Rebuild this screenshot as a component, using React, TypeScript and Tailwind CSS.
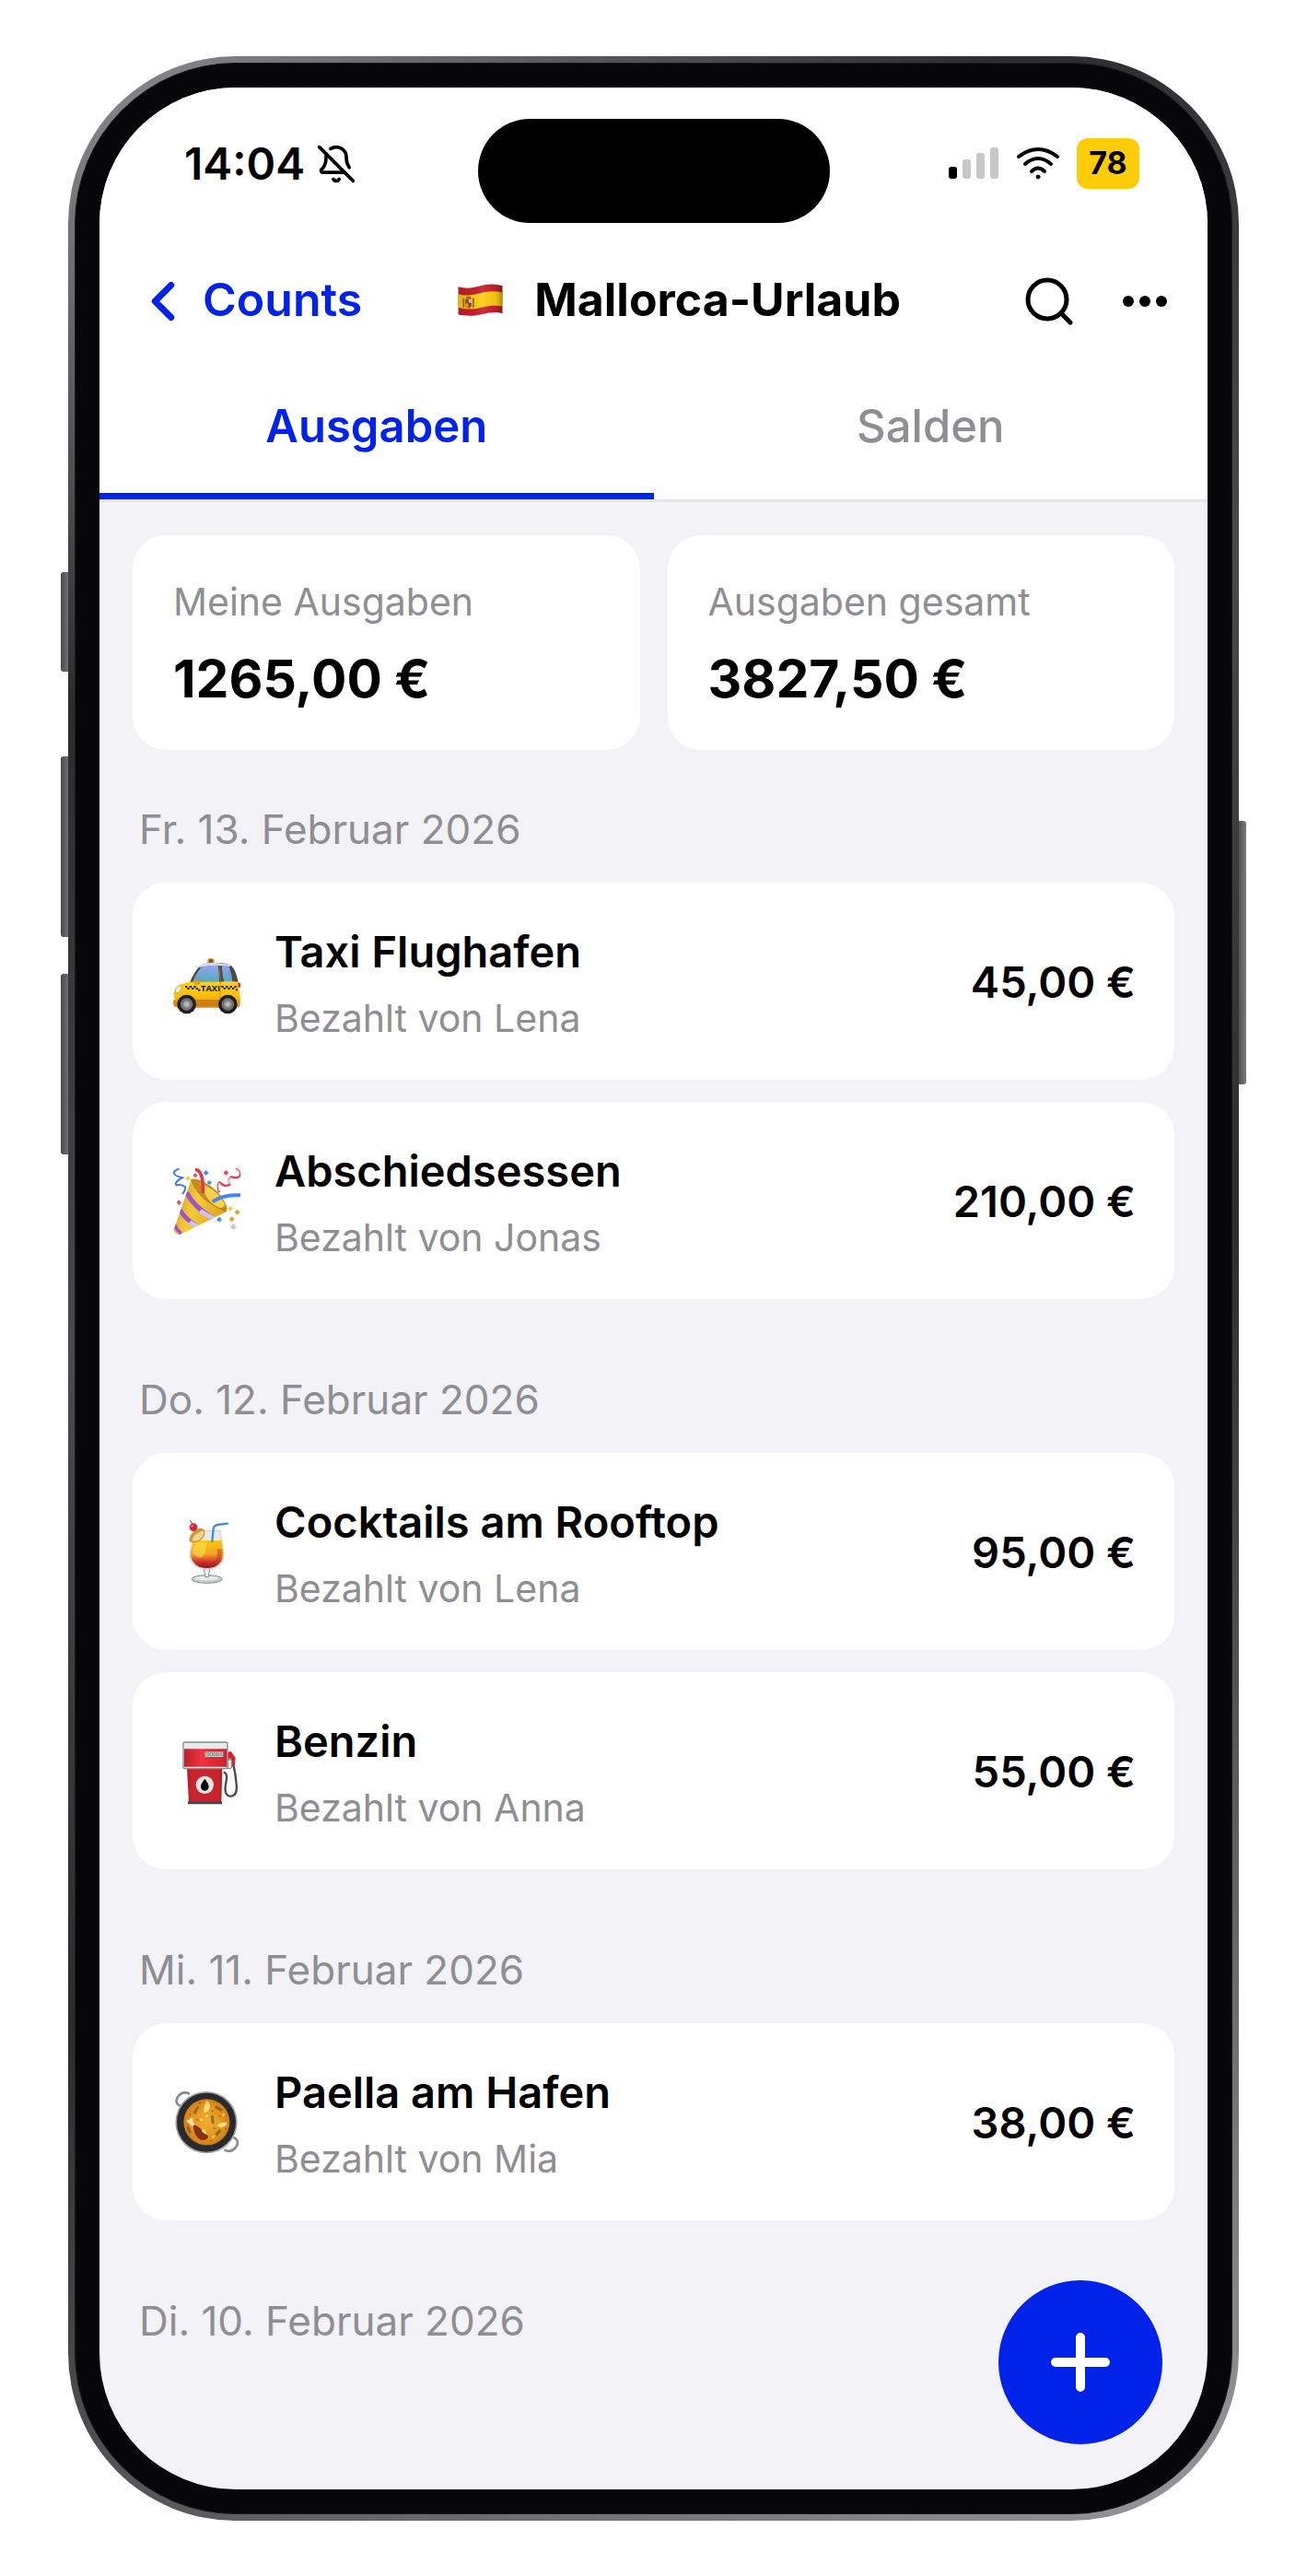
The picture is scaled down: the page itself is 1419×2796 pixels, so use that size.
import type { ReactNode } from "react";
import { BellOff, ChevronLeft } from "lucide-react";

type Expense = {
  id: string;
  title: string;
  paidBy: string;
  amount: string;
  icon: ReactNode;
};

type ExpenseDay = {
  date: string;
  expenses: Expense[];
};

function SpainFlag() {
  const wave = "M1310 783 C1345 793 1372 782 1395 777 C1420 772 1440 775 1455 780 V871 C1435 864 1412 868 1390 873 C1362 880 1335 880 1310 874 Z";
  return (
    <svg viewBox="1309 773 147 106" className="h-[35px] w-[49px] shrink-0" role="img" aria-label="Spanien">
      <defs>
        <linearGradient id="flag-shade" x1="0" x2="1" y1="0" y2="0">
          <stop offset="0" stopColor="#000" stopOpacity="0.12" />
          <stop offset="0.3" stopColor="#000" stopOpacity="0.02" />
          <stop offset="0.55" stopColor="#fff" stopOpacity="0.08" />
          <stop offset="0.85" stopColor="#000" stopOpacity="0.06" />
          <stop offset="1" stopColor="#000" stopOpacity="0.3" />
        </linearGradient>
      </defs>
      <path d={wave} fill="#c4202a" />
      <path
        d="M1310 807 C1340 816 1368 807 1393 801 C1418 796 1438 798 1455 802 V848 C1437 843 1412 845 1391 850 C1365 857 1336 858 1310 851 Z"
        fill="#ffcb12"
      />
      <path d={wave} fill="url(#flag-shade)" />
      <rect x="1325" y="820" width="5" height="31" fill="#8a5a1c" />
      <rect x="1357" y="820" width="5" height="31" fill="#8a5a1c" />
      <path d="M1333 823 h21 v20 q-2 10 -10.500 10 q-8.500 0 -10.500 -10 Z" fill="#a3402a" />
      <path d="M1344 823 h10 v13 h-10 Z" fill="#c9b8a8" />
      <path d="M1334 837 h9 v14 q-8 -2 -9 -9 Z" fill="#e0a526" />
      <circle cx="1344" cy="837" r="3" fill="#3f4d8a" />
      <path d="M1335 822 q0 -8 9 -8 q9 0 9 8 Z" fill="#a8571f" />
    </svg>
  );
}

function TaxiIcon() {
  return (
    <svg viewBox="54 26 219 219" className="size-full">
      <defs>
        <linearGradient id="taxi-body" x1="0" x2="0" y1="0" y2="1">
          <stop offset="0" stopColor="#ffd21a" />
          <stop offset="0.55" stopColor="#fcbf0a" />
          <stop offset="1" stopColor="#d88a12" />
        </linearGradient>
        <linearGradient id="taxi-glass" x1="0" x2="0" y1="0" y2="1">
          <stop offset="0" stopColor="#93a5f2" />
          <stop offset="1" stopColor="#56a9b8" />
        </linearGradient>
        <radialGradient id="taxi-hub">
          <stop offset="0" stopColor="#d4d4d4" />
          <stop offset="0.7" stopColor="#7c7c7c" />
          <stop offset="1" stopColor="#585858" />
        </radialGradient>
      </defs>
      <path d="M166 75 v-9 q0 -6 6 -6 h9 q7 0 7 6 v9 Z" fill="#e09a1c" />
      <rect x="171" y="63" width="12" height="12" rx="3" fill="#5b5b5b" />
      <path d="M107 141 Q128 88 150 79 Q172 72 214 75 Q240 77 250 91 Q262 111 266 141 Z" fill="#4a4a4c" />
      <path d="M128 90 Q150 75 178 74 Q220 73 241 82 L238 87 Q190 79 146 88 Z" fill="#dcdcde" />
      <path d="M116 139 Q130 105 146 89 Q165 81 200 82 Q205 110 204 139 Z" fill="url(#taxi-glass)" />
      <path d="M213 82 Q231 82 236 88 Q245 108 247 134 L220 136 Q213 113 213 82 Z" fill="url(#taxi-glass)" />
      <path
        d="M56 177 Q58 155 72 147 Q91 137 116 136 H205 Q236 132 265 136 Q270 148 270 166 Q275 195 271 214 Q268 220 250 220 H70 Q56 218 55 209 Q53 198 59 193 Z"
        fill="url(#taxi-body)"
      />
      <path d="M126 194 H205 V216 H126 Z" fill="#cf7f17" />
      <path d="M56 193 Q66 202 78 204 L72 218 Q56 217 55 208 Z" fill="#d7871a" />
      <path d="M205 84 Q205 120 209 138 L206 190" fill="none" stroke="#c67c0c" strokeWidth="2" />
      <path d="M61 165 Q65 149 79 149 Q84 157 77 166 Q69 174 61 171 Z" fill="#f6f3ea" stroke="#c9932c" strokeWidth="2" />
      <ellipse cx="132" cy="138" rx="10" ry="8" fill="#e5a011" />
      <path d="M265 139 h7 q3 7 1 15 h-7 Z" fill="#d42a35" />
      <g fill="#201a08">
        <path d="M93 149h7v6h-7zM107 149h7v6h-7zM121 149h7v6h-7zM100 155h7v6h-7zM114 155h7v6h-7zM128 155h7v6h-7zM135 160h7v6h-7z" />
        <path d="M211 149h7v6h-7zM225 149h7v6h-7zM239 149h7v6h-7zM253 149h7v6h-7zM218 155h7v6h-7zM232 155h7v6h-7zM246 155h7v6h-7zM258 159h6v6h-6z" />
      </g>
      <text x="144" y="167" fontSize="28" fontWeight="700" fontFamily="Open Sans, sans-serif" fill="#171204">
        TAXI
      </text>
      {[98, 232].map((cx) => (
        <g key={cx}>
          <circle cx={cx} cy="209" r="31" fill="#1f1f20" />
          <circle cx={cx} cy="209" r="19" fill="url(#taxi-hub)" stroke="#9a9a9a" strokeWidth="2" />
          <circle cx={cx} cy="209" r="6" fill="#bdbdbd" />
        </g>
      ))}
    </svg>
  );
}

function PartyIcon() {
  return (
    <svg viewBox="54 740 219 219" className="size-full overflow-visible">
      <defs>
        <linearGradient id="party-cone" x1="0" x2="1" y1="0" y2="0.4">
          <stop offset="0" stopColor="#c98f16" />
          <stop offset="0.5" stopColor="#f6c93a" />
          <stop offset="1" stopColor="#dfa21c" />
        </linearGradient>
        <clipPath id="party-clip">
          <path d="M113 780 Q130 845 228 884 L78 958 Q66 962 55 946 Z" />
        </clipPath>
      </defs>
      <path d="M112 781 Q120 772 155 788 Q210 817 228 866 Q233 883 222 885 Q150 862 112 781 Z" fill="#c78c1c" />
      <path d="M142 792 Q205 818 222 862 Q215 876 196 870 Q160 846 142 792 Z" fill="#f5d34e" />
      <g clipPath="url(#party-clip)">
        <rect x="50" y="775" width="185" height="190" fill="url(#party-cone)" />
        <path d="M98 822 Q120 868 184 906" fill="none" stroke="#9a55cf" strokeWidth="15" />
        <path d="M142 882 Q160 895 186 907" fill="none" stroke="#cfc2f5" strokeWidth="15" />
        <path d="M76 878 Q94 910 130 930" fill="none" stroke="#9a55cf" strokeWidth="14" />
        <path d="M108 918 Q118 926 134 932" fill="none" stroke="#cfc2f5" strokeWidth="14" />
        <path d="M58 926 Q64 942 80 956" fill="none" stroke="#9a55cf" strokeWidth="11" />
      </g>
      <path d="M113 780 Q131 845 226 884" fill="none" stroke="#b07a14" strokeWidth="3" />
      <path d="M126 748 Q153 748 151 824" fill="none" stroke="#e6364a" strokeWidth="11" />
      <path d="M182 852 Q217 827 273 831" fill="none" stroke="#4a86ea" strokeWidth="12" />
      <path d="M74 744 Q52 752 58 762 Q66 770 84 774 Q54 790 66 798 Q82 794 93 804 Q96 814 84 827" fill="none" stroke="#3f78e6" strokeWidth="6" />
      <path d="M203 822 Q196 786 207 790 Q222 806 238 796 Q232 774 245 771 Q264 778 271 768 Q272 750 258 745" fill="none" stroke="#dd4458" strokeWidth="7" />
      <path d="M205 817 Q199 789 207 793 M237 794 Q234 777 244 775 M268 765 Q269 751 259 748" fill="none" stroke="#e4d6ee" strokeWidth="5" />
      <g fill="#4d8df0">
        <path d="M161 749l9 9-9 9-9-9zM172 782l8 8-8 8-8-8zM204 901l9 9-9 9-9-9z" />
      </g>
      <g fill="#e05466">
        <path d="M126 758l8 8-8 8-8-8zM226 749l9 9-9 9-9-9zM73 846l8 9-8 9-8-9z" />
      </g>
      <g fill="#f4ce4e">
        <path d="M102 767l9 9-9 9-9-9zM240 865l9 9-9 9-9-9z" />
      </g>
      <g fill="#d9a42a">
        <path d="M263 877l9 9-9 9-9-9zM245 900l9 9-9 9-9-9z" />
      </g>
      <path d="M250 926l8 8-8 8-8-8z" fill="#d9c8e8" stroke="#c17f98" strokeWidth="2" />
    </svg>
  );
}

function CocktailIcon() {
  return (
    <svg viewBox="54 50 219 219" className="size-full">
      <defs>
        <linearGradient id="drink" x1="0" x2="0" y1="0" y2="1">
          <stop offset="0" stopColor="#fdc60c" />
          <stop offset="0.5" stopColor="#f0a425" />
          <stop offset="0.78" stopColor="#cf2f2a" />
          <stop offset="1" stopColor="#8f1a1a" />
        </linearGradient>
      </defs>
      <ellipse cx="164" cy="248" rx="50" ry="13" fill="#c9cccd" stroke="#8c8f91" strokeWidth="3" />
      <ellipse cx="164" cy="245" rx="38" ry="7" fill="#e9ecec" />
      <path d="M158 212 Q150 222 158 230 V241 H170 V230 Q177 222 169 212 Z" fill="#eef0f0" stroke="#85898b" strokeWidth="3" />
      <path d="M122 90 H208 Q212 128 219 160 Q222 198 190 211 Q164 219 137 210 Q105 197 109 160 Q118 126 122 90 Z" fill="#e9eaec" stroke="#bcbec2" strokeWidth="2" />
      <path d="M120 122 H211 Q214 142 217 162 Q219 194 189 208 Q164 216 139 208 Q109 194 111 162 Q115 142 120 122 Z" fill="url(#drink)" />
      <path d="M126 130 Q150 125 162 130 Q164 160 146 178 Q124 176 118 160 Z" fill="#ffe457" opacity="0.55" />
      <path d="M196 150 Q200 170 194 186 Q188 198 172 203 Q206 199 214 164 L211 150 Z" fill="#a8321c" opacity="0.45" />
      <path d="M106 125 Q105 102 126 88 Q148 76 157 90 Q160 112 139 124 Q120 134 106 125 Z" fill="#c99a35" />
      <path d="M116 122 Q120 100 153 90 Q156 108 139 120 Q127 127 116 122 Z" fill="#eed591" />
      <path d="M181 125 L185 84 Q187 73 199 71 L231 67" fill="none" stroke="#3f8ee8" strokeWidth="7" strokeLinecap="round" />
      <path d="M110 57 L118 72" stroke="#6e4040" strokeWidth="3" />
      <circle cx="120" cy="79" r="13" fill="#d6263a" />
      <circle cx="116" cy="75" r="4" fill="#ef7483" />
    </svg>
  );
}

function FuelIcon() {
  return (
    <svg viewBox="54 764 219 219" className="size-full">
      <defs>
        <linearGradient id="fuel-head" x1="0" x2="1" y1="0" y2="0">
          <stop offset="0" stopColor="#c01f28" />
          <stop offset="0.4" stopColor="#ee333f" />
          <stop offset="1" stopColor="#c8222c" />
        </linearGradient>
      </defs>
      <path d="M218 876 Q232 880 227 905 Q216 955 242 955 Q264 955 260 915 Q257 880 250 852" fill="none" stroke="#4a4a4b" strokeWidth="7" />
      <path d="M232 812 L242 808 Q250 820 257 830 L254 858 L243 857 L240 830 L232 838 Z" fill="#d5232e" />
      <path d="M231 836 h14 v26 q-8 6 -14 2 Z" fill="#e4e4e5" stroke="#7b7b7c" strokeWidth="3" />
      <path d="M99 866 H214 L211 973 H105 Z" fill="#bd1f28" />
      <path d="M108 866 H206 L204 973 H111 Z" fill="#c9242d" />
      <path d="M102 971 H213 V981 H102 Z" fill="#4a4a4c" />
      <rect x="87" y="779" width="144" height="86" rx="6" fill="#e9eaea" stroke="#88898b" strokeWidth="4" />
      <path d="M90 801 H229 V859 H90 Z" fill="url(#fuel-head)" />
      <rect x="158" y="810" width="59" height="17" fill="#d3d3d5" />
      <path d="M163 814h7v9h-7zM174 814h7v9h-7zM185 814h7v9h-7zM196 814h6v9h-6zM207 814h6v9h-6z" fill="none" stroke="#6c6c6e" strokeWidth="2" />
      <circle cx="157" cy="918" r="29" fill="#e4e4e6" />
      <path d="M157 898 Q171 916 170 924 A13 13 0 0 1 144 924 Q144 914 157 898 Z" fill="#0b0b0c" />
    </svg>
  );
}

function PaellaIcon() {
  return (
    <svg viewBox="54 83 219 219" className="size-full overflow-visible">
      <defs>
        <radialGradient id="paella-rice">
          <stop offset="0" stopColor="#efae30" />
          <stop offset="0.7" stopColor="#e0951e" />
          <stop offset="1" stopColor="#cf7f16" />
        </radialGradient>
      </defs>
      <path d="M78 140 Q58 132 68 112 Q82 89 108 100" fill="none" stroke="#8c8c8e" strokeWidth="8" />
      <path d="M250 242 Q270 250 261 269 Q246 295 220 282" fill="none" stroke="#8c8c8e" strokeWidth="8" />
      <circle cx="162" cy="193" r="101" fill="#a2a3a5" />
      <circle cx="162" cy="193" r="96" fill="#2a2a2c" />
      <circle cx="163" cy="192" r="75" fill="url(#paella-rice)" />
      <path d="M119 200 Q142 206 168 238 Q168 252 146 251 Q120 240 119 200 Z" fill="#8a3012" />
      <path d="M98 190 Q98 182 106 186 Q110 174 118 180 Q116 190 124 200 L116 206 Q108 196 98 190 Z" fill="#f3e2ae" />
      <path d="M162 122 Q176 130 174 146 Q170 160 154 162 Q152 140 162 122 Z" fill="#f7d96c" />
      <path d="M195 203 Q212 188 230 194 Q228 208 208 210 Z" fill="#f7dc84" />
      <path d="M150 212 Q162 218 164 232 Q156 232 146 220 Z" fill="#f7d96c" />
      <path d="M192 137 L215 150 L211 158 L190 146 Z" fill="#8d6a1c" />
      <path d="M134 138 L139 143 L127 167 L119 161 Z" fill="#8d6a1c" />
      <path d="M177 171 h8 l3 25 h-9 Z" fill="#8d6a1c" />
      <path d="M206 214 L211 222 L197 238 L190 230 Z" fill="#8d6a1c" />
      <path d="M101 196 L114 226 L106 230 L99 214 Z" fill="#8d6a1c" />
      <g fill="#cf4a17">
        <circle cx="110" cy="168" r="3" />
        <circle cx="141" cy="129" r="3" />
        <circle cx="182" cy="156" r="3" />
        <circle cx="206" cy="172" r="3" />
        <circle cx="188" cy="212" r="3" />
        <circle cx="178" cy="252" r="3" />
        <circle cx="226" cy="214" r="3" />
        <circle cx="132" cy="184" r="3" />
      </g>
      <g fill="#ffd75e">
        <circle cx="146" cy="184" r="5" />
        <circle cx="164" cy="172" r="4" />
        <circle cx="218" cy="168" r="4" />
        <circle cx="184" cy="240" r="4" />
      </g>
    </svg>
  );
}

function WifiIcon() {
  return (
    <svg viewBox="0 0 46 36" className="h-[36px] w-[46px]" fill="none" stroke="#000" strokeWidth="4" strokeLinecap="round" aria-hidden="true">
      <path d="M2 11 Q23 -5 44 11" />
      <path d="M9 19 Q23 7 37 19" />
      <path d="M16 27 Q23 20 30 27" />
      <circle cx="23" cy="33" r="2" fill="#000" stroke="#000" strokeWidth="1" />
    </svg>
  );
}

const DAYS: ExpenseDay[] = [
  {
    date: "Fr. 13. Februar 2026",
    expenses: [
      { id: "taxi", title: "Taxi Flughafen", paidBy: "Lena", amount: "45,00 €", icon: <TaxiIcon /> },
      { id: "abschied", title: "Abschiedsessen", paidBy: "Jonas", amount: "210,00 €", icon: <PartyIcon /> },
    ],
  },
  {
    date: "Do. 12. Februar 2026",
    expenses: [
      { id: "cocktails", title: "Cocktails am Rooftop", paidBy: "Lena", amount: "95,00 €", icon: <CocktailIcon /> },
      { id: "benzin", title: "Benzin", paidBy: "Anna", amount: "55,00 €", icon: <FuelIcon /> },
    ],
  },
  {
    date: "Mi. 11. Februar 2026",
    expenses: [{ id: "paella", title: "Paella am Hafen", paidBy: "Mia", amount: "38,00 €", icon: <PaellaIcon /> }],
  },
  { date: "Di. 10. Februar 2026", expenses: [] },
];

function StatusBar() {
  return (
    <div className="grid grid-cols-[1fr_auto_1fr] items-start pt-[34px]">
      <div className="flex h-[98px] items-center gap-3 pl-[92px]">
        <span className="text-[48px] leading-[60px] font-semibold">14:04</span>
        <BellOff className="size-[44px]" strokeWidth={2} aria-hidden="true" />
      </div>
      <div className="h-[113px] w-[382px] rounded-full bg-black" />
      <div className="flex h-24 items-center justify-end pr-[74px]">
        <div className="mr-[20px] flex items-end gap-[6px]">
          <span className="h-[13px] w-[9px] rounded-[3px] bg-black" />
          <span className="h-[21px] w-[9px] rounded-[3px] bg-[#c7c7c9]" />
          <span className="h-[28px] w-[9px] rounded-[3px] bg-[#c7c7c9]" />
          <span className="h-[34px] w-[9px] rounded-[3px] bg-[#c7c7c9]" />
        </div>
        <WifiIcon />
        <span className="ml-[19px] flex h-[55px] w-[68px] items-center justify-center rounded-[12px] bg-[#ffcc0a] text-[34px] leading-[40px] font-bold">
          78
        </span>
      </div>
    </div>
  );
}

function NavBar() {
  return (
    <header className="flex h-[170px] items-center pr-[44px] pl-[34px]">
      <a href="#counts" className="flex shrink-0 items-center text-[50px] leading-[60px] font-semibold text-[#0022e9]">
        <ChevronLeft className="size-[70px]" strokeWidth={2.4} aria-hidden="true" />
        <span className="pb-1 pl-2">Counts</span>
      </a>
      <div className="flex flex-1 items-center gap-[34px] pb-1 pl-[104px]">
        <SpainFlag />
        <h1 className="text-[50px] leading-[60px] font-bold whitespace-nowrap">Mallorca-Urlaub</h1>
      </div>
      <div className="flex shrink-0 items-center gap-[54px]">
        <button type="button" aria-label="Suchen">
          <svg viewBox="0 0 52 52" className="size-[52px]" fill="none" stroke="#000" strokeWidth="5" strokeLinecap="round">
            <circle cx="24" cy="24" r="21" />
            <path d="M39 39 L49 49" />
          </svg>
        </button>
        <button type="button" aria-label="Mehr">
          <svg viewBox="0 0 48 12" className="h-[12px] w-[48px]">
            <circle cx="6" cy="6" r="6" />
            <circle cx="24" cy="6" r="6" />
            <circle cx="42" cy="6" r="6" />
          </svg>
        </button>
      </div>
    </header>
  );
}

function Tabs() {
  return (
    <div role="tablist" className="grid grid-cols-2 border-b-[3px] border-[#e5e5ea] text-[49px] leading-[60px]">
      <button
        type="button"
        role="tab"
        aria-selected="true"
        className="border-b-[7px] border-[#0022e9] pt-[21px] pb-[42px] font-semibold text-[#0022e9]"
      >
        Ausgaben
      </button>
      <button
        type="button"
        role="tab"
        aria-selected="false"
        className="border-b-[7px] border-transparent pt-[21px] pb-[42px] font-medium text-[#8e8e93]"
      >
        Salden
      </button>
    </div>
  );
}

function SummaryCard({ label, amount }: { label: string; amount: string }) {
  return (
    <div className="rounded-[36px] bg-white px-[44px] pt-[46px] pb-[42px]">
      <p className="text-[41px] leading-[52px] text-[#8e8e93]">{label}</p>
      <p className="pt-[23px] text-[57px] leading-[70px] font-bold">{amount}</p>
    </div>
  );
}

function ExpenseRow({ expense }: { expense: Expense }) {
  return (
    <li className="flex h-[214px] items-center rounded-[36px] bg-white pr-[42px] pl-[44px]">
      <span className="size-[73px] shrink-0" aria-hidden="true">
        {expense.icon}
      </span>
      <div className="flex min-w-0 flex-1 flex-col gap-4 pt-1 pl-[37px]">
        <p className="text-[47px] leading-[60px] font-semibold">{expense.title}</p>
        <p className="text-[41px] leading-[52px] text-[#8e8e93]">Bezahlt von {expense.paidBy}</p>
      </div>
      <p className="shrink-0 pt-[2px] text-[47px] leading-[60px] font-semibold">{expense.amount}</p>
    </li>
  );
}

export default function App() {
  return (
    <div className="bg-white px-[74px] py-[61px] font-['Inter','Liberation_Sans',sans-serif] text-black">
      <div className="relative">
        <div className="absolute top-[560px] -left-2 h-[108px] w-5 rounded-[3px] bg-linear-to-r from-[#48484a] to-[#b4b4ba]" />
        <div className="absolute top-[760px] -left-2 h-[196px] w-5 rounded-[3px] bg-linear-to-r from-[#48484a] to-[#b4b4ba]" />
        <div className="absolute top-[996px] -left-2 h-[196px] w-5 rounded-[3px] bg-linear-to-r from-[#48484a] to-[#b4b4ba]" />
        <div className="absolute top-[830px] -right-2 h-[286px] w-[10px] rounded-[3px] bg-linear-to-r from-[#48484a] to-[#7c7c80]" />
        <div className="relative rounded-[182px] bg-[linear-gradient(145deg,#8e8e93_0%,#2c2c2e_20%,#4a4a4e_40%,#2c2c2e_60%,#98989d_100%)] p-[7px]">
          <div className="rounded-[175px] border border-[#1c1c1e] bg-[#070709] p-[26px]">
            <main className="relative overflow-hidden rounded-[148px] bg-[#f2f2f7] pb-[155px]">
              <div className="bg-white">
                <StatusBar />
                <NavBar />
                <Tabs />
              </div>
              <div className="px-[36px] pt-[36px]">
                <div className="grid grid-cols-2 gap-[30px]">
                  <SummaryCard label="Meine Ausgaben" amount="1265,00 €" />
                  <SummaryCard label="Ausgaben gesamt" amount="3827,50 €" />
                </div>
                <div className="flex flex-col gap-[81px] pt-[58px]">
                  {DAYS.map((day) => (
                    <section key={day.date}>
                      <h2 className="pl-[7px] text-[44px] leading-[56px] text-[#8e8e93]">{day.date}</h2>
                      {day.expenses.length > 0 && (
                        <ul className="flex flex-col gap-6 pt-[30px]">
                          {day.expenses.map((expense) => (
                            <ExpenseRow key={expense.id} expense={expense} />
                          ))}
                        </ul>
                      )}
                    </section>
                  ))}
                </div>
              </div>
              <button
                type="button"
                aria-label="Ausgabe hinzufügen"
                className="absolute right-[49px] bottom-[49px] flex size-[178px] items-center justify-center rounded-full bg-[#0022e9]"
              >
                <svg viewBox="0 0 64 64" className="size-[64px]" fill="none" stroke="#fff" strokeWidth="10" strokeLinecap="round">
                  <path d="M32 5 V59 M5 32 H59" />
                </svg>
              </button>
            </main>
          </div>
        </div>
      </div>
    </div>
  );
}
